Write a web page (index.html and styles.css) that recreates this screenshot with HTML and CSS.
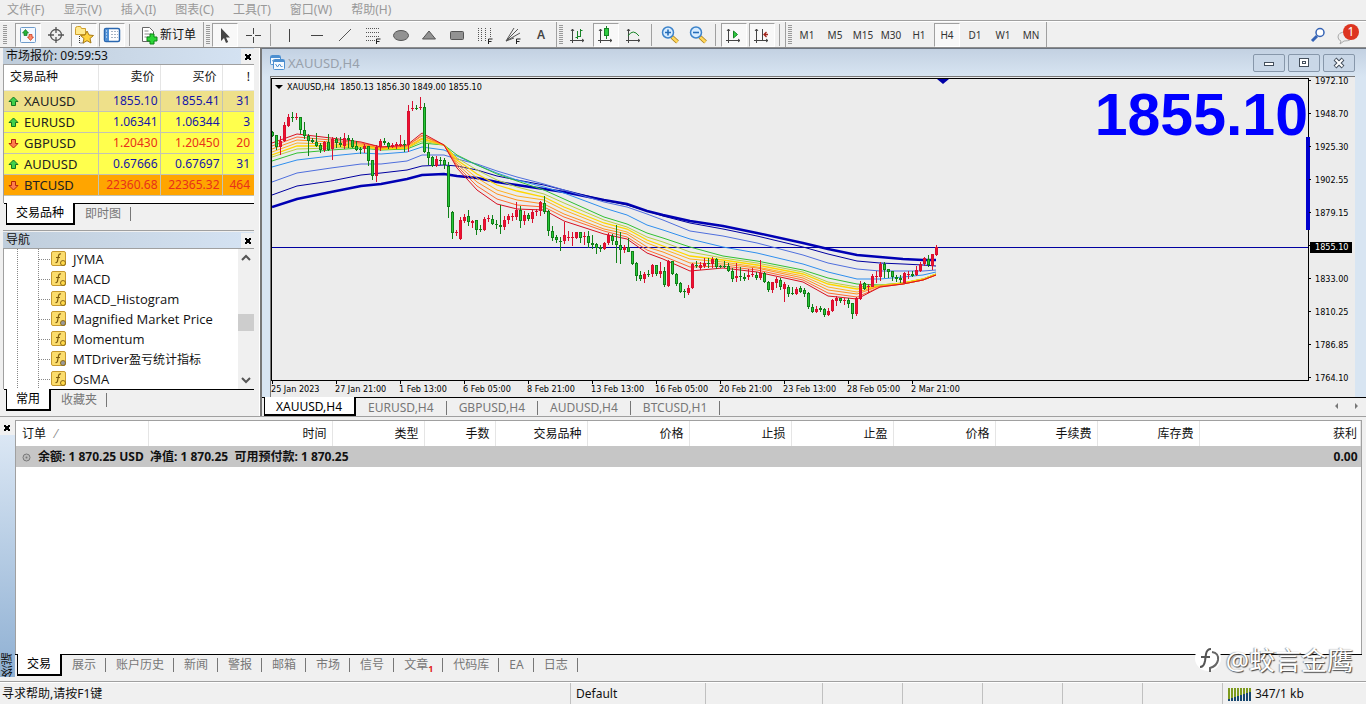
FILE: index.html
```html
<!DOCTYPE html>
<html lang="zh-CN">

<head>
    <meta charset="UTF-8">
    <title>XAUUSD,H4</title>
    <link rel="stylesheet" href="styles.css">
</head>

<body>
    <nav class="menu">
        <a href="#">文件(F)</a>
        <a href="#">显示(V)</a>
        <a href="#">插入(I)</a>
        <a href="#">图表(C)</a>
        <a href="#">工具(T)</a>
        <a href="#">窗口(W)</a>
        <a href="#">帮助(H)</a>
    </nav>

    <div class="toolbar">
        <div class="group">
            <span class="grip"></span>
            <button class="on" aria-label="市场报价"><svg width="20" height="20"><rect x="2.500" y="2.500" width="15" height="15" rx="1" fill="#f4f9ff" stroke="#6f9ccb"/><path d="M7.500 4.500l3 3.500H9v2.500H6V8H4.500z" fill="#25b33a" stroke="#147322" stroke-width=".7"/><path d="M12.500 15.500L9.500 12H11V9.500h3V12h1.500z" fill="#ff8b67" stroke="#c32c13" stroke-width=".7"/></svg></button>
            <button aria-label="数据窗口"><svg width="20" height="20" fill="none" stroke="#555" stroke-width="1.300"><circle cx="10" cy="10" r="5.500"/><path d="M10 2v6M10 12v6M2 10h6M12 10h6"/></svg></button>
            <button class="on" aria-label="导航"><svg width="20" height="20"><path d="M1.500 3.500q0-2 2-2h3l1 2h4v6h-10z" fill="#ffe98f" stroke="#cf9f2b"/><path d="M5.500 11v7h4" fill="none" stroke="#333" stroke-dasharray="1 1"/><path d="M13 6l2 4 4.500.500-3.500 3 1 4.500-4-2.300L9 18l1-4.500-3.500-3L11 10z" fill="#ffd23d" stroke="#a87a13"/></svg></button>
            <button class="on" aria-label="终端"><svg width="20" height="20"><rect x="2.500" y="3.500" width="15" height="13" rx="1.500" fill="#fff" stroke="#2a67b0" stroke-width="1.500"/><path d="M3 4h4v12H3z" fill="#4f8fd4"/><path d="M9 6.500h7M9 9.500h7M9 12.500h7" stroke="#a6b4c4" stroke-dasharray="2 1"/><path d="M4 6h1M4 9h1M4 12h1" stroke="#fff"/></svg></button>
            <span class="sep"></span>
            <button class="order"><svg width="18" height="20"><path d="M2.500 2.500h7l4 4v10h-11z" fill="#fff" stroke="#666"/><path d="M4.500 6h4M4.500 9h7M4.500 12h5" stroke="#888"/><path d="M10 9h4v3h3v4h-3v3h-4v-3H7v-4h3z" fill="#2bd536" stroke="#0c8516"/></svg>新订单</button>
        </div>
        <div class="group">
            <span class="grip"></span>
            <button class="on" aria-label="光标"><svg width="20" height="20"><path d="M6 3v13l3-3 2 5 2.200-1-2.200-4.500h4z" fill="#444"/></svg></button>
            <button aria-label="十字准线"><svg width="20" height="20"><path d="M10.500 3v6M10.500 12v6M3 10.500h6M12 10.500h6" stroke="#444"/></svg></button>
            <span class="sep"></span>
            <button aria-label="垂直线"><svg width="20" height="20"><path d="M10.500 4v13" stroke="#444"/></svg></button>
            <button aria-label="水平线"><svg width="20" height="20"><path d="M4 10.500h12" stroke="#444"/></svg></button>
            <button aria-label="趋势线"><svg width="20" height="20"><path d="M4 16L16 4" stroke="#555"/></svg></button>
            <button aria-label="斐波回调线"><svg width="20" height="20"><path d="M3 3.500h14M3 7.500h14M3 11.500h14M3 15.500h9" stroke="#555" stroke-dasharray="1 1"/><path d="M13.500 19v-5h4M13.500 16.500h3" fill="none" stroke="#222"/></svg></button>
            <button aria-label="椭圆"><svg width="20" height="20"><ellipse cx="10" cy="10.500" rx="7.500" ry="5" fill="#929292" stroke="#555"/></svg></button>
            <button aria-label="三角形"><svg width="20" height="20"><path d="M10 6l6.500 8h-13z" fill="#929292" stroke="#555"/></svg></button>
            <button aria-label="矩形"><svg width="20" height="20"><rect x="3.500" y="6.500" width="13" height="8" rx="1" fill="#929292" stroke="#555"/></svg></button>
            <button aria-label="斐波时区"><svg width="20" height="20"><path d="M3.500 3v14M6.500 3v14M10.500 3v14M15.500 3v10" stroke="#555" stroke-dasharray="1 1"/><path d="M13.500 19v-5h4M13.500 16.500h3" fill="none" stroke="#222"/></svg></button>
            <button aria-label="斐波扇形"><svg width="20" height="20"><path d="M3 16L11 3M3 16L15 4M3 16L17 8M3 16l8-3" stroke="#555"/><path d="M13.500 19v-5h4M13.500 16.500h3" fill="none" stroke="#222"/></svg></button>
            <button class="letter" aria-label="文字">A</button>
        </div>
        <div class="group">
            <span class="grip"></span>
            <button aria-label="柱状图"><svg width="20" height="20" fill="none"><path d="M4.500 4v14M2 15.500h14M3 6l1.500-2L6 6M14 14l2 1.500-2 1.500" stroke="#444"/><path d="M9.500 6v8M7.500 12.500h2M12.500 4v8M9.500 11.500h3M12.500 5.500h2" stroke="#178427"/></svg></button>
            <button class="on" aria-label="蜡烛图"><svg width="20" height="20" fill="none"><path d="M4.500 4v14M2 15.500h14M3 6l1.500-2L6 6M14 14l2 1.500-2 1.500" stroke="#444"/><path d="M10.500 1v13" stroke="#178427"/><rect x="8.500" y="3.500" width="4" height="7" fill="#2ecb3f" stroke="#178427"/></svg></button>
            <button aria-label="折线图"><svg width="20" height="20" fill="none"><path d="M4.500 4v14M2 15.500h14M3 6l1.500-2L6 6M14 14l2 1.500-2 1.500" stroke="#444"/><path d="M4 11Q9 3 15 11" stroke="#178427"/></svg></button>
            <span class="sep"></span>
            <button aria-label="放大"><svg width="20" height="20"><path d="M12 12l5.500 5" stroke="#a87a13" stroke-width="4"/><path d="M12 12l5.500 5" stroke="#ffd75c" stroke-width="2.500"/><circle cx="8" cy="7.500" r="5.500" fill="#d7ecff" stroke="#3d83ca" stroke-width="1.500"/><path d="M5 7.500h6M8 4.500v6" stroke="#256db8" stroke-width="1.600"/></svg></button>
            <button aria-label="缩小"><svg width="20" height="20"><path d="M12 12l5.500 5" stroke="#a87a13" stroke-width="4"/><path d="M12 12l5.500 5" stroke="#ffd75c" stroke-width="2.500"/><circle cx="8" cy="7.500" r="5.500" fill="#d7ecff" stroke="#3d83ca" stroke-width="1.500"/><path d="M5 7.500h6" stroke="#256db8" stroke-width="1.600"/></svg></button>
            <span class="sep"></span>
            <button class="on" aria-label="自动滚动"><svg width="20" height="20" fill="none"><path d="M4.500 4v14M2 15.500h14M3 6l1.500-2L6 6M14 14l2 1.500-2 1.500" stroke="#444"/><path d="M9.500 6v7l4-3.500z" fill="#2ecb3f" stroke="#178427"/></svg></button>
            <button class="on" aria-label="图表平移"><svg width="20" height="20" fill="none"><path d="M4.500 4v14M2 15.500h14M3 6l1.500-2L6 6M14 14l2 1.500-2 1.500M10.500 4v11" stroke="#444"/><path d="M16 9.500h-4M14.500 7L12 9.500l2.500 2.500" stroke="#a3261c" stroke-width="1.300"/></svg></button>
            <span class="sep"></span>
        </div>
        <div class="group periods">
            <span class="grip"></span>
            <button>M1</button>
            <button>M5</button>
            <button>M15</button>
            <button>M30</button>
            <button>H1</button>
            <button class="on">H4</button>
            <button>D1</button>
            <button>W1</button>
            <button>MN</button>
        </div>
        <div class="tools">
            <button aria-label="搜索"><svg width="20" height="20" fill="none" stroke="#3563b5"><path d="M4 16l5-5" stroke-width="3"/><circle cx="12" cy="7.500" r="4" fill="#fff" stroke-width="1.500"/></svg></button>
            <button class="chat" aria-label="消息"><svg width="20" height="20"><path d="M10 7q-8 0-8 5 0 3 3 4l-1 3 4-3q8 0 8-4.500z" fill="#eee" stroke="#aaa"/></svg><span class="badge">1</span></button>
        </div>
    </div>

    <main class="work">
        <aside class="side">
            <section class="panel market">
                <header class="caption"><h2>市场报价: 09:59:53</h2><button class="close" aria-label="关闭"></button></header>
                <div class="box">
                    <table class="quotes">
                        <colgroup><col class="c-name"><col class="c-price"><col class="c-price"><col class="c-spread"></colgroup>
                        <thead>
                            <tr><th>交易品种</th><th>卖价</th><th>买价</th><th>!</th></tr>
                        </thead>
                        <tbody>
                            <tr class="selected"><td><svg width="11" height="11"><use href="#up"/></svg>XAUUSD</td><td>1855.10</td><td>1855.41</td><td>31</td></tr>
                            <tr><td><svg width="11" height="11"><use href="#up"/></svg>EURUSD</td><td>1.06341</td><td>1.06344</td><td>3</td></tr>
                            <tr class="down"><td><svg width="11" height="11"><use href="#down"/></svg>GBPUSD</td><td>1.20430</td><td>1.20450</td><td>20</td></tr>
                            <tr><td><svg width="11" height="11"><use href="#up"/></svg>AUDUSD</td><td>0.67666</td><td>0.67697</td><td>31</td></tr>
                            <tr class="down crypto"><td><svg width="11" height="11"><use href="#down"/></svg>BTCUSD</td><td>22360.68</td><td>22365.32</td><td>464</td></tr>
                        </tbody>
                    </table>
                </div>
                <div class="tabs">
                    <button class="tab active">交易品种</button>
                    <button class="tab">即时图</button>
                </div>
            </section>

            <section class="panel navigator">
                <header class="caption"><h2>导航</h2><button class="close" aria-label="关闭"></button></header>
                <div class="box tree">
                    <ul>
                        <li><svg width="16" height="16"><use href="#fx"/></svg>JYMA</li>
                        <li><svg width="16" height="16"><use href="#fx"/></svg>MACD</li>
                        <li><svg width="16" height="16"><use href="#fx"/></svg>MACD_Histogram</li>
                        <li class="custom"><svg width="16" height="16"><use href="#fx"/></svg>Magnified Market Price</li>
                        <li><svg width="16" height="16"><use href="#fx"/></svg>Momentum</li>
                        <li class="custom"><svg width="16" height="16"><use href="#fx"/></svg><span>MTDriver<small>盈亏统计指标</small></span></li>
                        <li><svg width="16" height="16"><use href="#fx"/></svg>OsMA</li>
                    </ul>
                    <div class="scroll">
                        <svg width="16" height="17" fill="none" stroke="#555" stroke-width="2"><path d="M4 11l4-4 4 4"/></svg>
                        <span class="thumb"></span>
                        <svg width="16" height="17" fill="none" stroke="#555" stroke-width="2"><path d="M4 6l4 4 4-4"/></svg>
                    </div>
                </div>
                <div class="tabs">
                    <button class="tab active">常用</button>
                    <button class="tab">收藏夹</button>
                </div>
            </section>
        </aside>

        <section class="charts">
            <div class="window">
                <header class="window-title">
                    <svg width="15" height="15" fill="#f5faff" stroke="#4d8fd0"><rect x=".5" y=".5" width="10" height="9" rx="1"/><path d="M1 2h9" stroke-width="2"/><path d="M2 6l2-1 2 1"/><rect x="3.500" y="4.500" width="11" height="10" rx="1"/><path d="M4 6h10" stroke-width="2"/><path d="M5.500 9l2 3 2-3 2 3 1-1" fill="none"/></svg>
                    <h1>XAUUSD,H4</h1>
                    <button aria-label="最小化"><svg width="14" height="12"><rect x="2.500" y="5.500" width="9" height="3" fill="#fff" stroke="#444f5c"/></svg></button>
                    <button aria-label="最大化"><svg width="14" height="12"><rect x="2.500" y="1.500" width="9" height="8" fill="#fff" stroke="#444f5c"/><rect x="5.500" y="4.500" width="3" height="2" fill="none" stroke="#444f5c"/></svg></button>
                    <button aria-label="关闭图表"><svg width="14" height="12"><path d="M3 2l8 8M11 2l-8 8" stroke="#444f5c" stroke-width="4"/><path d="M3.500 2.500l7 7M10.500 2.500l-7 7" stroke="#fff" stroke-width="2"/></svg></button>
                </header>
                <div class="client">
                    <div class="plot">
                        <svg id="chart" width="100%" height="100%"></svg>
                        <p class="ohlc"><svg width="8" height="5"><path d="M0 0h8L4 4z"/></svg>XAUUSD,H4&nbsp; 1850.13 1856.30 1849.00 1855.10</p>
                        <strong class="magnified">1855.10</strong>
                        <span class="range"></span>
                    </div>
                    <div class="scale">
                        <ol>
                            <li>1972.10</li>
                            <li>1948.70</li>
                            <li>1925.30</li>
                            <li>1902.55</li>
                            <li>1879.15</li>
                            <li></li>
                            <li>1833.00</li>
                            <li>1810.25</li>
                            <li>1786.85</li>
                            <li>1764.10</li>
                        </ol>
                        <span class="price">1855.10</span>
                    </div>
                    <ol class="times">
                        <li>25 Jan 2023</li>
                        <li>27 Jan 21:00</li>
                        <li>1 Feb 13:00</li>
                        <li>6 Feb 05:00</li>
                        <li>8 Feb 21:00</li>
                        <li>13 Feb 13:00</li>
                        <li>16 Feb 05:00</li>
                        <li>20 Feb 21:00</li>
                        <li>23 Feb 13:00</li>
                        <li>28 Feb 05:00</li>
                        <li>2 Mar 21:00</li>
                    </ol>
                </div>
            </div>
            <div class="tabs chart-tabs">
                <button class="tab active">XAUUSD,H4</button>
                <button class="tab">EURUSD,H4</button>
                <button class="tab">GBPUSD,H4</button>
                <button class="tab">AUDUSD,H4</button>
                <button class="tab">BTCUSD,H1</button>
                <svg class="arrows" width="28" height="10" fill="#777"><path d="M5 2v6L2 5zM22 2v6l3-3z"/></svg>
            </div>
        </section>
    </main>

    <section class="terminal">
        <div class="rail">
            <button class="close" aria-label="关闭"></button>
            <h2>终端</h2>
        </div>
        <div class="pane">
            <div class="sheet">
                <table class="orders">
                    <colgroup><col class="o-id"><col class="o-time"><col class="o-type"><col class="o-lots"><col class="o-type"><col class="o-num"><col class="o-num"><col class="o-num"><col class="o-num"><col class="o-num"><col class="o-num"><col></colgroup>
                    <thead>
                        <tr><th>订单 <span class="sort">⁄</span></th><th>时间</th><th>类型</th><th>手数</th><th>交易品种</th><th>价格</th><th>止损</th><th>止盈</th><th>价格</th><th>手续费</th><th>库存费</th><th>获利</th></tr>
                    </thead>
                    <tbody>
                        <tr><td colspan="11"><svg width="9" height="9"><circle cx="4.500" cy="4.500" r="3.500" fill="#bbb" stroke="#777"/><circle cx="4.500" cy="4.500" r="1" fill="#777"/></svg>余额: 1 870.25 USD&nbsp; 净值: 1 870.25&nbsp; 可用预付款: 1 870.25</td><td>0.00</td></tr>
                    </tbody>
                </table>
            </div>
            <div class="tabs">
                <button class="tab active">交易</button>
                <button class="tab">展示</button>
                <button class="tab">账户历史</button>
                <button class="tab">新闻</button>
                <button class="tab">警报</button>
                <button class="tab">邮箱</button>
                <button class="tab">市场</button>
                <button class="tab">信号</button>
                <button class="tab">文章<sub>1</sub></button>
                <button class="tab">代码库</button>
                <button class="tab">EA</button>
                <button class="tab">日志</button>
            </div>
        </div>
    </section>

    <footer class="status">
        <span class="help">寻求帮助,请按F1键</span>
        <span class="profile">Default</span>
        <span class="wide"></span>
        <span></span>
        <span></span>
        <span></span>
        <span></span>
        <span></span>
        <span class="traffic"><svg id="bars" width="24" height="14"></svg>347/1 kb</span>
    </footer>

    <div class="watermark">
        <svg width="28" height="32"><circle cx="14" cy="14" r="13" fill="#fff"/><path d="M6 23q4 0 5-6l1-7q1-5 5-5M7 13h9" fill="none" stroke="#555" stroke-width="2"/><path d="M18 8q7 1 6 8-1 6-8 8v4" fill="none" stroke="#666" stroke-width="2"/></svg>
        @蛟言金鹰
    </div>

    <svg class="symbols">
        <symbol id="up" viewBox="0 0 11 11"><path d="M5.500 1L10 5.500H7.500v4h-4v-4H1z" fill="#3fd04b" stroke="#147322"/></symbol>
        <symbol id="down" viewBox="0 0 11 11"><path d="M5.500 10L1 5.500h2.500v-4h4v4H10z" fill="#ff7d4c" stroke="#b3260f"/></symbol>
        <symbol id="fx" viewBox="0 0 16 16"><rect x=".5" y=".5" width="14" height="14" rx="1.500" fill="#fbdc6c" stroke="#c79a2e"/><path d="M10 3q-2-.5-2.500 2L6.500 10q-.5 2-2 1.500M5 6.500h4" fill="none" stroke="#7c5a10" stroke-width="1.200"/><circle class="dot" cx="12" cy="12" r="2.500" stroke="#8d6c1a"/></symbol>
    </svg>

    <script src="chart.js"></script>
</body>

</html>
```
FILE: styles.css
```css
* {
    box-sizing: border-box;
}

body {
    margin: 0;
    height: 100vh;
    display: flex;
    flex-direction: column;
    overflow: hidden;
    background: #f0f0f0;
    color: #111;
    font-family: "Noto Sans", "Noto Sans CJK SC", sans-serif;
    font-size: 12px;
    line-height: 16px;
}

h1, h2, p, ul, ol {
    margin: 0;
    padding: 0;
    font-size: 12px;
    font-weight: normal;
    list-style: none;
}

button {
    margin: 0;
    padding: 0;
    border: 0;
    background: none;
    color: inherit;
    font: inherit;
}

svg {
    display: block;
    flex: none;
}

.symbols {
    display: none;
}

/* 菜单栏 */
.menu {
    display: flex;
    flex: none;
    gap: 19px;
    height: 21px;
    padding: 2px 7px 0;
    border-bottom: 1px solid #a0a0a0;
}

.menu a {
    color: #999;
    text-decoration: none;
}

/* 工具栏 */
.toolbar {
    display: flex;
    flex: none;
    height: 27px;
    border-top: 1px solid #fff;
    border-bottom: 1px solid #8d8d8d;
}

.group {
    display: flex;
    align-items: center;
    gap: 2px;
    padding: 0 2px;
    border-right: 1px solid #a0a0a0;
}

.group:first-child {
    padding-left: 3px;
}

.group:first-child .grip {
    margin-right: 6px;
}

.grip {
    width: 4px;
    height: 20px;
    background: repeating-linear-gradient(#999 0 1px, #f0f0f0 1px 2px);
}

.sep {
    width: 1px;
    height: 22px;
    margin: 0 3px 0 2px;
    background: #a0a0a0;
}

.group button {
    display: flex;
    align-items: center;
    justify-content: center;
    width: 26px;
    height: 24px;
    border: 1px solid transparent;
}

.group button.on {
    border-color: #a0a0a0 #fff #fff #a0a0a0;
    background: #f8f8f8;
}

.group button.order {
    width: 66px;
    gap: 2px;
    white-space: nowrap;
}

.group button.letter {
    color: #444;
    font-weight: 600;
}

.periods {
    color: #333;
    font-size: 10px;
}

.tools {
    display: flex;
    align-items: center;
    gap: 8px;
    margin-left: auto;
    padding-right: 10px;
}

.chat {
    position: relative;
}

.badge {
    position: absolute;
    top: -1px;
    right: -3px;
    width: 16px;
    height: 16px;
    border-radius: 8px;
    background: #dd3420;
    color: #fff;
}

/* 标签页 */
.tabs {
    display: flex;
    flex: none;
    height: 27px;
    padding-left: 2px;
    border-top: 1px solid #000;
    background: #f0f0f0;
}

.tab {
    position: relative;
    height: 20px;
    padding: 0 10px;
    color: #777;
}

.tab::after {
    content: "";
    position: absolute;
    top: 3px;
    right: 0;
    height: 14px;
    border-right: 1px solid #777;
}

.tab.active {
    height: 22px;
    margin-top: -1px;
    padding: 0 9px;
    border: solid #000;
    border-width: 0 2px 2px 1px;
    background: #fff;
    color: #000;
}

.tab.active::after {
    display: none;
}

/* 主区域 */
.work {
    display: flex;
    flex: none;
    height: 369px;
    border-bottom: 1px solid #a0a0a0;
}

.side {
    display: flex;
    flex-direction: column;
    flex: none;
    width: 260px;
    padding: 0 5px 0 3px;
    border-right: 1px solid #fff;
}

.panel {
    display: flex;
    flex-direction: column;
}

.market {
    height: 184px;
    border-bottom: 1px solid #a0a0a0;
}

.navigator {
    flex: 1;
}

.caption {
    display: flex;
    align-items: center;
    flex: none;
    height: 16px;
    padding-left: 3px;
    background: linear-gradient(90deg, #bfcddb, #d5e3f3);
}

.caption h2 {
    flex: 1;
}

.close {
    position: relative;
    width: 13px;
    height: 15px;
    background: #f0f0f0;
}

.close::before {
    content: "";
    position: absolute;
    top: 5px;
    left: 4px;
    width: 6px;
    height: 6px;
    background: linear-gradient(45deg, transparent 38%, #000 38% 62%, transparent 62%), linear-gradient(-45deg, transparent 38%, #000 38% 62%, transparent 62%);
}

.box {
    flex: 1;
    min-height: 0;
    border: 1px solid #a0a0a0;
    border-width: 1px 0 0 1px;
    background: #fff;
}

.side .tabs {
    margin-left: 1px;
}

.navigator .caption {
    margin-top: 1px;
}

table {
    width: 100%;
    border-collapse: collapse;
    table-layout: fixed;
}

th {
    font-weight: normal;
}

.c-name {
    width: 94px;
}

.c-price {
    width: 62px;
}

.quotes th,
.quotes td {
    height: 21px;
    padding: 0 2px 0 0;
    border: solid #c3c3b4;
    border-width: 0 1px 1px 0;
    text-align: right;
}

.quotes th {
    height: 25px;
    padding-right: 5px;
    border-color: #e5e5e5;
}

.quotes th:first-child {
    padding-left: 6px;
    text-align: left;
}

.quotes th:last-child,
.quotes td:last-child {
    padding-right: 4px;
    border-right: 0;
}

.quotes td {
    background: #ffff4d;
    color: #1515a8;
}

.quotes td:first-child {
    padding-left: 20px;
    color: #222;
    font-size: 13px;
    text-align: left;
}

.quotes td svg {
    float: left;
    margin: 3px 0 0 -16px;
}

.quotes .selected td {
    background: #eee08a;
}

.quotes .down td:not(:first-child) {
    color: #e8301a;
}

.quotes .crypto td {
    background: #ffa500;
}

/* 导航树 */
.tree {
    display: flex;
    overflow: hidden;
}

.tree ul {
    flex: 1;
    background:
        repeating-linear-gradient(#888 0 1px, #fff 1px 2px) 13px 0 / 1px 100% no-repeat,
        repeating-linear-gradient(#888 0 1px, #fff 1px 2px) 34px 0 / 1px 100% no-repeat;
}

.tree li {
    display: flex;
    align-items: center;
    gap: 6px;
    height: 20px;
    padding-left: 47px;
    background: repeating-linear-gradient(90deg, #888 0 1px, #fff 1px 2px) 35px 10px / 11px 1px no-repeat;
    font-family: "Open Sans", "Noto Sans CJK SC", sans-serif;
    font-size: 13px;
    white-space: nowrap;
}

.tree small {
    font-size: 12px;
}

.tree li svg {
    fill: #ffd94a;
}

.tree li.custom svg {
    fill: #999;
}

.scroll {
    display: flex;
    flex-direction: column;
    width: 16px;
    background: #f0f0f0;
}

.thumb {
    height: 17px;
    margin: 48px 0 auto;
    background: #cdcdcd;
}

/* 图表窗口 */
.charts {
    display: flex;
    flex-direction: column;
    flex: 1;
    min-width: 0;
    border-left: 2px solid #777;
}

.window {
    display: flex;
    flex-direction: column;
    flex: 1;
    min-height: 0;
    padding: 0 11px 0 8px;
    border-top: 1px solid #6b7480;
    background: linear-gradient(#c3d1e2, #d8e5f2 28px);
}

.window-title {
    display: flex;
    align-items: center;
    gap: 3px;
    height: 27px;
}

.window-title h1 {
    flex: 1;
    color: #98a1ac;
    font-size: 13px;
}

.window-title button {
    display: flex;
    align-items: center;
    justify-content: center;
    width: 32px;
    height: 18px;
    border: 1px solid #8797aa;
    border-radius: 2px;
    background: #c9d7e7;
}

.client {
    display: grid;
    grid-template-columns: minmax(0, 1fr) 46px;
    grid-template-rows: minmax(0, 1fr) 16px;
    flex: 1;
    min-height: 0;
    padding-top: 1px;
    border: solid #777;
    border-width: 1px 0 0 1px;
    background: #ececec;
    color: #000;
    font-family: "DejaVu Sans Condensed", "DejaVu Sans", sans-serif;
}

.plot {
    position: relative;
    min-height: 0;
    border: 1px solid #000;
}

.ohlc {
    position: absolute;
    top: 0;
    left: 3px;
    display: flex;
    align-items: center;
    gap: 4px;
    font-size: 9px;
}

.magnified {
    position: absolute;
    top: 0;
    right: 0;
    color: #00f;
    font: bold 59px/72px "Liberation Sans", sans-serif;
}

.range {
    position: absolute;
    top: 58px;
    right: -2px;
    width: 4px;
    height: 93px;
    background: #0000cd;
}

.scale {
    position: relative;
}

.scale ol {
    margin-top: -14px;
    font-size: 9px;
}

.scale li {
    display: flex;
    align-items: center;
    gap: 4px;
    height: 33px;
}

.scale li::before {
    content: "";
    width: 2px;
    height: 1px;
    background: #000;
}

.price {
    position: absolute;
    top: 164px;
    left: 1px;
    width: 42px;
    padding-left: 5px;
    background: #000;
    color: #fff;
    font-size: 9px;
    line-height: 11px;
}

.times {
    display: flex;
    min-width: 0;
    font-size: 9px;
}

.times li {
    position: relative;
    flex: none;
    width: 64px;
    white-space: nowrap;
}

.times li::before {
    content: "";
    position: absolute;
    top: 0;
    left: 1px;
    height: 3px;
    border-left: 1px solid #000;
}

.chart-tabs {
    height: 19px;
}

.chart-tabs .tab {
    padding: 0 13px 0 12px;
}

.chart-tabs .active {
    height: 19px;
    padding: 2px 12px 0 11px;
}

.arrows {
    margin: 3px 5px 0 auto;
}

/* 终端 */
.terminal {
    display: flex;
    flex: 1;
    min-height: 0;
    padding: 3px 4px 0 0;
    border-bottom: 1px solid #a0a0a0;
}

.rail {
    display: flex;
    flex-direction: column;
    width: 15px;
    padding-bottom: 4px;
}

.rail h2 {
    flex: 1;
    background: linear-gradient(#8fb0d3, #dbe7f4);
    line-height: 15px;
    text-align: left;
    writing-mode: vertical-rl;
    transform: rotate(180deg);
}

.pane {
    display: flex;
    flex-direction: column;
    flex: 1;
    min-width: 0;
    border-top: 1px solid #a0a0a0;
}

.sheet {
    flex: 1;
    border: solid #a0a0a0;
    border-width: 0 1px;
    background: #fff;
}

.o-id {
    width: 132px;
}

.o-time {
    width: 184px;
}

.o-type {
    width: 92px;
}

.o-lots {
    width: 71px;
}

.o-num {
    width: 102px;
}

.orders th,
.orders td {
    height: 25px;
    padding: 0 5px;
    border-right: 1px solid #e5e5e5;
    text-align: right;
}

.orders th:first-child {
    padding-left: 6px;
    text-align: left;
}

.sort {
    padding-left: 6px;
    color: #888;
}

.orders th:last-child,
.orders td:last-child {
    padding-right: 3px;
}

.orders td {
    height: 21px;
    border: 0;
    background: #c6c6c6;
    font-weight: bold;
}

.orders td:first-child {
    padding-left: 22px;
    text-align: left;
}

.orders td svg {
    float: left;
    margin: 4px 0 0 -16px;
}

.tab sub {
    color: #e02020;
    font-size: 9px;
    font-weight: bold;
    line-height: 9px;
}

/* 状态栏 */
.status {
    display: flex;
    flex: none;
    height: 22px;
    border-top: 1px solid #fff;
    line-height: 22px;
}

.status span {
    width: 80px;
    padding-left: 5px;
    border-left: 1px solid #c0c0c0;
}

.status .help {
    flex: 1;
    padding-left: 2px;
    border: 0;
}

.status .profile {
    width: 135px;
}

.status .wide {
    width: 117px;
}

.status .traffic {
    display: flex;
    align-items: center;
    gap: 3px;
    width: 144px;
}

.watermark {
    position: absolute;
    right: 13px;
    bottom: 26px;
    display: flex;
    align-items: center;
    gap: 4px;
    color: #fff;
    font-size: 26px;
    line-height: 36px;
    text-shadow: 1px 1px 1px #444, -1px 0 1px #999;
}
```
FILE: chart.js
```js
// 每根K线: 最高, 实体上沿, 实体下沿, 最低, 颜色
var candles = `
52 53 57 58 g,56 56 68 71 g,57 62 68 76 r,43 46 62 63 r,35 38 47 48 r,33 38 39 43 g,34 38 39 41 r,38 38 51 55 g,43 51 57 60 g,55 57 62 77 g,
59 61 63 64 g,54 63 67 68 g,64 66 71 74 g,62 63 71 73 r,55 63 71 72 g,58 60 70 81 r,58 60 64 69 g,58 64 66 68 g,54 59 67 70 r,56 59 61 69 g,
59 61 68 69 g,62 67 71 72 g,68 70 71 75 g,65 67 70 74 r,67 67 82 87 g,81 81 97 101 g,66 68 97 103 r,60 62 68 72 r,59 62 64 66 g,63 64 68 70 g,
64 66 68 69 r,63 65 67 70 r,56 65 66 68 r,61 65 66 73 g,26 32 66 73 r,22 29 30 32 r,26 29 30 31 g,18 28 29 31 r,24 28 73 74 g,65 73 79 86 g,
77 78 87 88 g,77 80 87 88 r,78 81 82 86 g,79 81 86 90 g,83 87 128 139 g,132 133 154 160 g,151 153 154 157 r,138 141 160 161 r,135 138 142 144 r,131 137 143 147 g,
141 142 144 149 r,141 141 151 156 g,146 150 151 153 g,138 140 151 152 r,136 139 140 143 r,136 140 145 146 g,141 145 146 150 g,126 146 148 155 g,137 141 148 151 r,135 137 141 145 r,
134 137 138 142 r,123 131 138 141 r,127 131 142 149 g,132 136 142 146 r,134 136 140 142 g,131 133 140 144 r,130 132 133 137 r,122 123 132 137 r,117 124 133 135 g,131 132 152 157 g,
147 152 159 162 g,156 158 161 164 g,158 162 163 172 g,143 156 162 165 r,152 158 159 162 r,153 158 159 167 r,153 153 159 160 r,153 153 159 164 g,153 157 158 166 r,152 157 164 169 g,
156 164 166 170 g,164 165 169 175 g,166 168 170 173 g,163 164 170 171 r,154 156 164 166 r,155 157 162 166 g,146 162 166 184 g,153 166 171 185 g,166 168 171 174 r,159 168 173 173 g,
172 172 185 186 g,183 184 197 202 g,192 196 200 202 g,193 195 200 204 r,191 195 196 198 g,185 186 195 198 r,186 186 195 197 g,183 192 195 199 r,188 192 206 208 g,181 182 207 208 r,
182 182 195 196 g,194 195 205 207 g,203 204 213 214 g,210 212 213 219 g,206 209 214 216 r,184 185 209 210 r,182 186 187 189 g,183 186 189 191 r,179 184 187 189 r,179 184 185 189 g,
178 180 185 189 r,179 180 188 190 g,186 187 188 189 g,182 187 188 189 g,184 187 192 193 g,189 192 200 203 g,184 197 199 203 r,188 197 198 202 g,194 198 200 202 g,190 196 198 201 r,
189 195 196 198 r,193 196 199 201 g,181 194 199 201 r,193 194 203 204 g,202 203 211 213 g,203 203 211 214 r,198 200 204 209 r,199 201 208 211 g,203 205 210 223 r,206 208 215 218 g,
208 214 215 216 g,208 210 215 216 r,207 209 213 214 g,209 211 215 218 g,213 214 228 230 g,225 228 233 234 g,227 230 233 234 r,227 229 231 233 g,229 230 236 238 g,229 232 236 237 r,
220 221 232 233 r,217 219 222 227 r,219 219 222 224 g,219 221 222 226 r,219 221 225 229 g,224 224 235 240 g,218 219 235 237 r,202 205 220 221 r,203 204 210 211 g,205 207 208 214 r,
195 197 208 208 r,192 197 198 204 r,183 185 198 202 r,183 185 191 199 g,190 190 193 199 g,192 192 198 202 g,196 198 200 203 g,196 199 201 204 g,193 194 204 204 r,192 195 196 200 r,
192 195 197 198 g,187 191 196 197 r,183 185 192 193 r,178 179 185 187 r,176 180 186 188 g,175 175 187 191 r,166 168 176 177 r`.split(',');

// 均线
var xs = [0, 25, 59, 89, 109, 135, 150, 172, 185, 205, 225, 245, 272, 292, 332, 355, 375, 391, 418, 451, 485, 531, 556, 585, 608, 631, 651, 664];
var red = [64, 55, 59, 63, 68, 66, 54, 66, 89, 111, 125, 130, 131, 142, 155, 160, 174, 180, 192, 189, 193, 203, 217, 220, 208, 205, 201, 196];
var green = [82, 74, 71, 69, 71, 70, 64, 66, 76, 86, 95, 102, 111, 120, 138, 145, 154, 159, 168, 177, 182, 191, 199, 205, 206, 204, 200, 195];
var sky = [88, 81, 77, 74, 75, 73, 68, 71, 77, 86, 94, 101, 108, 114, 129, 136, 146, 151, 160, 168, 174, 185, 193, 200, 200, 198, 196, 193];
var blue = [103, 94, 89, 85, 85, 82, 76, 76, 80, 85, 92, 98, 105, 111, 123, 128, 135, 141, 152, 157, 164, 176, 184, 190, 192, 192, 192, 191];
var navy = [116, 107, 102, 96, 94, 91, 87, 86, 87, 91, 97, 101, 106, 111, 121, 126, 132, 137, 144, 150, 157, 168, 175, 182, 184, 185, 186, 187];
var slow = [128, 120, 113, 107, 105, 100, 96, 95, 97, 99, 103, 106, 110, 113, 121, 125, 132, 136, 142, 147, 154, 164, 170, 176, 178, 180, 181, 181];

function line(ys, color, width) {
    var points = xs.map((x, i) => x + ',' + ys[i]).join(' ');
    return `<polyline points="${points}" fill="none" stroke="${color}" stroke-width="${width}"/>`;
}

// 红线和绿线之间的均线
function between(k) {
    return red.map((y, i) => Math.round(y + (green[i] - y) * k));
}

var out = '<path d="M0 168.500H3000" stroke="#0000a0"/><path d="M665 0h12l-6 5z" fill="#0000a8"/>';

out += line(slow, '#0000b4', 2.5);
out += line(navy, '#0000a0', 1);
out += line(blue, '#4f6fdd', 1);
out += line(sky, '#2f8fee', 1);
out += line(green, '#32c032', 1);
out += line(between(0.8), '#b8d040', 1);
out += line(between(0.64), '#ffd700', 1.3);
out += line(between(0.48), '#ffb020', 1);
out += line(between(0.32), '#ff9020', 1);
out += line(between(0.16), '#ff6a30', 1);
out += line(red, '#d81020', 1);

candles.forEach((item, i) => {
    var c = item.trim().split(' ');
    var x = i * 4;
    var edge = c[4] == 'g' ? '#108018' : '#d81030';
    var fill = c[4] == 'g' ? '#28c838' : '#f01030';
    out += `<path d="M${x + 0.5} ${c[0]}V${c[3]}" stroke="${edge}"/>`;
    out += `<rect x="${x - 1}" y="${c[1]}" width="3" height="${c[2] - c[1]}" fill="${edge}"/>`;
    out += `<path d="M${x + 0.5} ${+c[1] + 1}V${Math.max(c[2] - 1, +c[1] + 1)}" stroke="${fill}"/>`;
});

document.getElementById('chart').innerHTML = out;

// 连接状态
var bars = '';
for (var i = 0; i < 8; i++) {
    bars += `<rect x="${i * 3}" y="1" width="2" height="${11 - i}" fill="#7d9a1e"/>`;
    bars += `<rect x="${i * 3}" y="${12 - i}" width="2" height="${2 + i}" fill="#16466e"/>`;
}
document.getElementById('bars').innerHTML = bars;
```
